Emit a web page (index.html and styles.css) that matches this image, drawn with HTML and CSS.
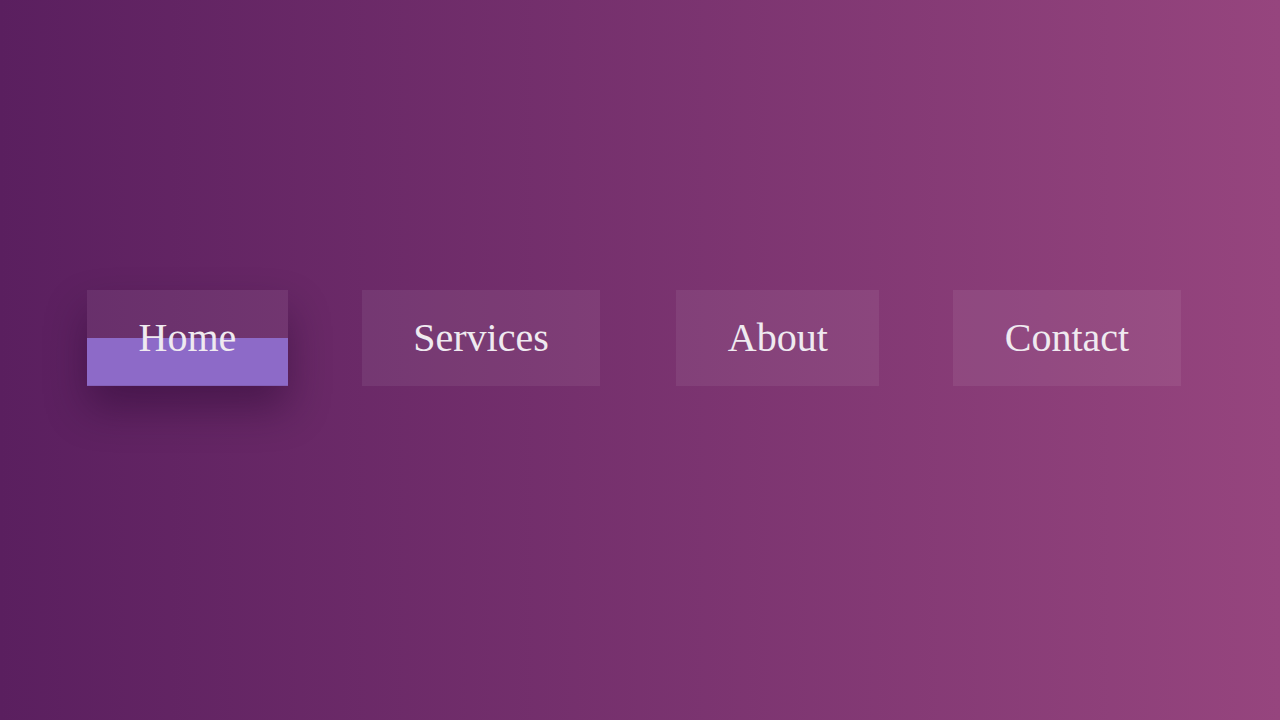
FILE: index.html
```html
<!DOCTYPE html>
<html lang="en">
<head>
<meta charset="utf-8">
<title>Nav</title>
<link rel="stylesheet" href="styles.css">
</head>
<body>
<nav class="nav">
  <a class="nav-item active" href="#">Home</a>
  <a class="nav-item" href="#">Services</a>
  <a class="nav-item" href="#">About</a>
  <a class="nav-item" href="#">Contact</a>
</nav>
</body>
</html>
```
FILE: styles.css
```css
html, body {
  margin: 0;
  height: 100%;
}
body {
  background: linear-gradient(90deg, #5a1f5f 0%, #96457e 100%);
  font-family: "Liberation Serif", "Times New Roman", serif;
  overflow: hidden;
}
.nav {
  display: flex;
  gap: 74px;
  padding: 290px 0 0 87px;
}
.nav-item {
  position: relative;
  display: block;
  padding: 25px 51.5px;
  font-size: 40px;
  line-height: 46px;
  color: #efeaf0;
  text-decoration: none;
  background: rgba(255, 255, 255, 0.065);
  z-index: 0;
}
.nav-item:nth-child(3) { margin-left: 2px; }
.nav-item.active {
  box-shadow: 0 22px 40px rgba(30, 0, 40, 0.38);
}
.nav-item.active::before {
  content: "";
  position: absolute;
  left: 0;
  right: 0;
  bottom: 0;
  height: 50%;
  background: #8d6ac8;
  border-bottom: 1px solid #8460b8;
  box-sizing: border-box;
  z-index: -1;
}
```
